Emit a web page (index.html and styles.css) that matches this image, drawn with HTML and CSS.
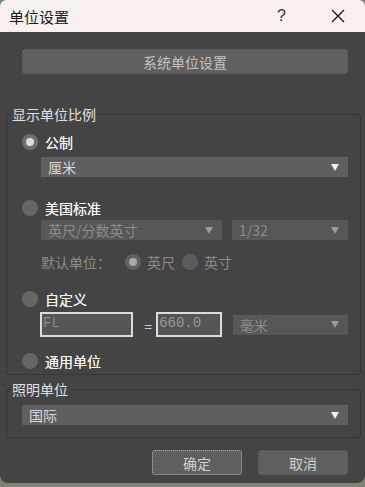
FILE: index.html
```html
<!DOCTYPE html>
<html lang="zh-CN">
<head>
    <meta charset="UTF-8">
    <meta name="viewport" content="width=device-width, initial-scale=1.0">
    <title>单位设置</title>
    <link rel="stylesheet" href="styles.css">
</head>
<body>
    <div class="dialog">
        <div class="titlebar">
            <span class="title">单位设置</span>
            <span class="help">?</span>
            <span class="close">
                <svg width="14" height="14" viewBox="0 0 14 14"><path d="M1 1 L13 13 M13 1 L1 13" stroke="#1a1a1a" stroke-width="1.4" fill="none"/></svg>
            </span>
        </div>

        <div class="content">
            <button class="btn system-btn">系统单位设置</button>

            <fieldset class="group scale-group">
                <legend>显示单位比例</legend>

                <div class="radio-row row-metric">
                    <span class="radio checked"></span>
                    <span class="radio-label">公制</span>
                </div>
                <div class="select select-metric">
                    <span>厘米</span>
                    <span class="arrow"></span>
                </div>

                <div class="radio-row row-us">
                    <span class="radio"></span>
                    <span class="radio-label">美国标准</span>
                </div>
                <div class="select-pair">
                    <div class="select disabled select-wide">
                        <span>英尺/分数英寸</span>
                        <span class="arrow"></span>
                    </div>
                    <div class="select disabled select-narrow">
                        <span>1/32</span>
                        <span class="arrow"></span>
                    </div>
                </div>
                <div class="default-row">
                    <span class="default-label">默认单位：</span>
                    <span class="radio small checked dim"></span>
                    <span class="dim-label">英尺</span>
                    <span class="radio small dim"></span>
                    <span class="dim-label">英寸</span>
                </div>

                <div class="radio-row row-custom">
                    <span class="radio"></span>
                    <span class="radio-label">自定义</span>
                </div>
                <div class="custom-row">
                    <div class="text-box box-name">FL</div>
                    <span class="equals">=</span>
                    <div class="text-box box-value">660.0</div>
                    <div class="select disabled select-narrow select-mm">
                        <span>毫米</span>
                        <span class="arrow"></span>
                    </div>
                </div>

                <div class="radio-row row-generic">
                    <span class="radio"></span>
                    <span class="radio-label">通用单位</span>
                </div>
            </fieldset>

            <fieldset class="group light-group">
                <legend>照明单位</legend>
                <div class="select select-light">
                    <span>国际</span>
                    <span class="arrow"></span>
                </div>
            </fieldset>

            <div class="button-group">
                <button class="btn focused">确定</button>
                <button class="btn">取消</button>
            </div>
        </div>
    </div>
</body>
</html>
```

FILE: styles.css
```css
:root {
    --bg-color: #444444;
    --title-color: #f7f0ef;
    --control-color: #5f5f5f;
    --disabled-color: #575757;
    --text-color: #e6e6e6;
    --dim-text: #8c8c8c;
    --border-color: #363636;
}

html {
    background-color: #7d8275;
}

body {
    margin: 0;
    width: 365px;
    height: 487px;
    font-family: "Noto Sans CJK SC", "Noto Sans", sans-serif;
    font-size: 14px;
    color: var(--text-color);
    overflow: hidden;
}

.dialog {
    background-color: var(--bg-color);
    border-radius: 6px 6px 8px 8px;
    overflow: hidden;
    height: 483px;
}

.titlebar {
    height: 32px;
    background-color: var(--title-color);
    display: flex;
    align-items: center;
    color: #1a1a1a;
}

.title {
    font-size: 15px;
    margin-left: 9px;
    flex: 1;
}

.help {
    font-family: "Liberation Sans", sans-serif;
    font-size: 16px;
    color: #333333;
    margin-right: 45px;
}

.close {
    display: flex;
    margin-right: 20px;
}

.content {
    padding: 17px 4px 0 6px;
}

.btn {
    font-family: "Noto Sans CJK SC", sans-serif;
    font-size: 14px;
    color: #cfcfcf;
    background-color: #606060;
    border: 1px solid #5a5a5a;
    border-radius: 3px;
    height: 25px;
    padding: 0;
    line-height: 22px;
}

.system-btn {
    display: block;
    width: 326px;
    margin-left: 16px;
    color: #c4c4c4;
}

.group {
    margin: 0;
    padding: 0 0 3px 0;
    border: 1px solid var(--border-color);
    border-radius: 3px;
    min-width: 0;
}

.group legend {
    font-size: 14px;
    line-height: 18px;
    height: 18px;
    padding: 0 2px;
    margin-left: 3px;
    color: #e0e0e0;
}

.scale-group {
    margin-top: 31px;
}

.radio-row {
    display: flex;
    align-items: center;
    height: 20px;
    margin-left: 15px;
    gap: 7px;
}

.radio {
    width: 16px;
    height: 16px;
    border-radius: 50%;
    background-color: #666666;
    box-sizing: border-box;
    flex-shrink: 0;
}

.radio.checked {
    background-color: #dddddd;
    border: 4px solid #6e6e6e;
}

.radio.dim {
    background-color: #5c5c5c;
}

.radio.checked.dim {
    background-color: #a8a8a8;
    border-color: #616161;
}

.radio-label {
    font-size: 14px;
    color: #f2f2f2;
    text-shadow: 0 0 0.4px #f2f2f2;
}

.row-metric { margin-top: 9px; }
.row-us { margin-top: 21px; }
.row-custom { margin-top: 17px; }
.row-generic { margin-top: 14px; }

.select {
    display: flex;
    align-items: center;
    justify-content: space-between;
    height: 20px;
    background-color: var(--control-color);
    padding: 0 9px 0 7px;
    box-sizing: border-box;
    font-size: 14px;
    color: #d8d8d8;
}

.select.disabled {
    background-color: var(--disabled-color);
    color: var(--dim-text);
}

.arrow {
    width: 0;
    height: 0;
    border-left: 4px solid transparent;
    border-right: 4px solid transparent;
    border-top: 7px solid #f0f0f0;
}

.select.disabled .arrow {
    border-top-color: #9a9a9a;
}

.select-metric {
    margin: 5px 12px 0 34px;
}

.select-pair {
    display: flex;
    gap: 10px;
    margin: 2px 12px 0 34px;
}

.select-wide {
    width: 181px;
}

.select-narrow {
    width: 116px;
}

.default-row {
    display: flex;
    align-items: center;
    height: 20px;
    margin: 12px 0 0 34px;
    color: var(--dim-text);
}

.default-label {
    width: 84px;
}

.radio.small {
    margin-right: 6px;
}

.dim-label {
    margin-right: 7px;
}

.custom-row {
    display: flex;
    align-items: center;
    margin: 3px 12px 0 33px;
}

.text-box {
    height: 25px;
    box-sizing: border-box;
    border: 2px solid #dcdcdc;
    background-color: #555555;
    font-family: "Liberation Mono", monospace;
    font-size: 14px;
    line-height: 19px;
    padding-left: 1px;
    color: #8a8a8a;
}

.box-name {
    width: 94px;
}

.equals {
    color: #cccccc;
    margin: 2px 4px 0 11px;
    font-size: 14px;
}

.box-value {
    width: 66px;
    color: #9a9a9a;
}

.select-mm {
    margin-left: 11px;
}

.light-group {
    margin-top: 5px;
    padding-bottom: 12px;
}

.select-light {
    margin: 7px 12px 0 15px;
}

.button-group {
    display: flex;
    justify-content: flex-end;
    gap: 16px;
    margin: 12px 13px 0 0;
}

.button-group .btn {
    width: 90px;
    height: 25px;
    color: #d0d0d0;
}

.button-group .focused {
    border: 1px dotted #b0b0b0;
}
```
